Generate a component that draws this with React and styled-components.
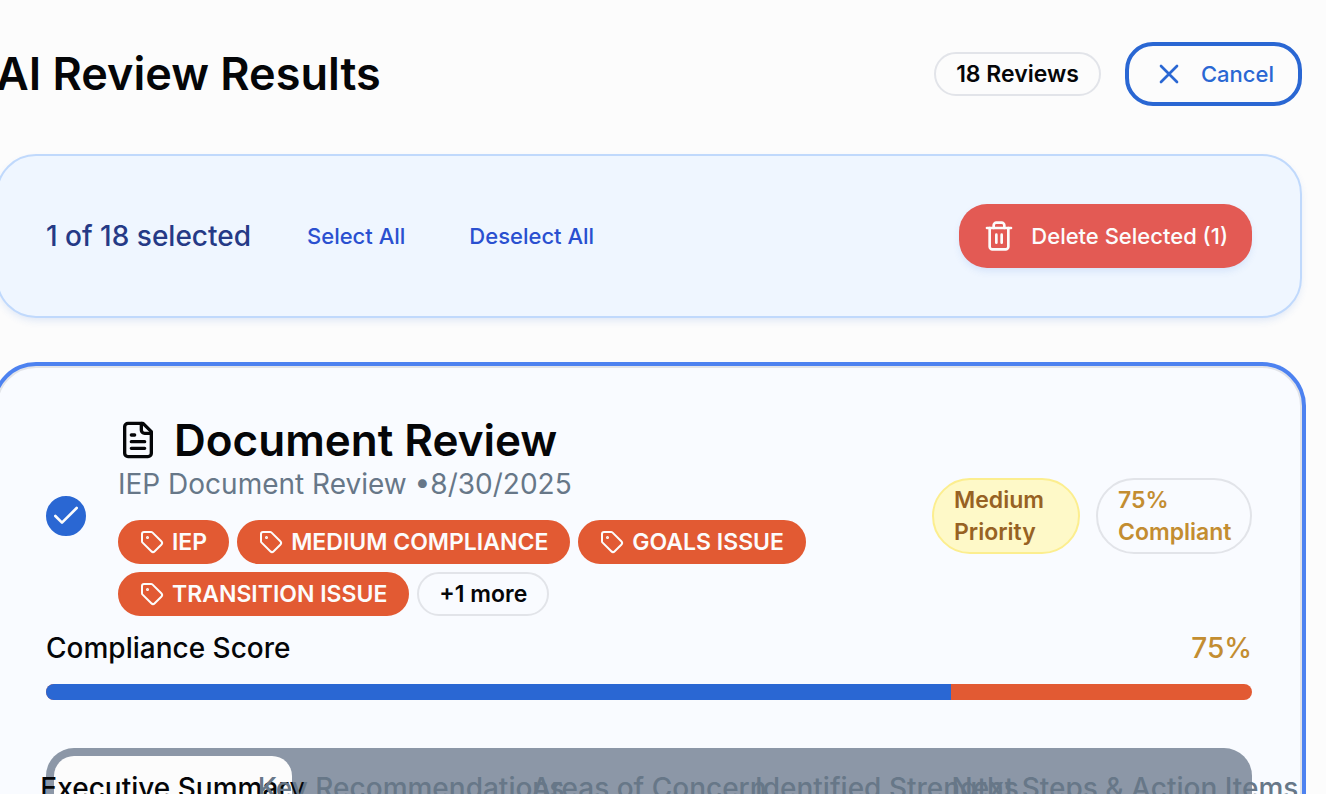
import React, { useState } from "react";
import styled, { createGlobalStyle, css } from "styled-components";

const GlobalStyle = createGlobalStyle`
  *, *::before, *::after { box-sizing: border-box; }
  html { scrollbar-width: none; }
  body {
    margin: 0;
    overflow-x: hidden;
    background: #fcfcfc;
    color: #050608;
    font-family: Inter, "Liberation Sans", sans-serif;
    font-size: 28px;
    line-height: 40px;
    -webkit-font-smoothing: antialiased;
  }
  h1, h2, p { margin: 0; }
  button { font: inherit; cursor: pointer; }
`;

const Page = styled.main`
  display: flex;
  flex-direction: column;
  gap: 48px;
  margin: 42px 24px 48px -4px;
`;

const Header = styled.header`
  display: flex;
  align-items: center;
  justify-content: space-between;
`;

const PageTitle = styled.h1`
  font-size: 45px;
  line-height: 64px;
  font-weight: 600;
`;

const Row = styled.div`
  display: flex;
  align-items: center;
  gap: ${(p) => p.$gap}px;
`;

const Icon = styled.svg`
  flex: none;
  width: ${(p) => p.$size}px;
  height: ${(p) => p.$size}px;
  fill: none;
  stroke: currentColor;
  stroke-width: 2;
  stroke-linecap: round;
  stroke-linejoin: round;
`;

const badgeTones = {
  outline: css`
    border-color: #e2e4e9;
  `,
  tag: css`
    background: #e25a33;
    border-color: #e25a33;
    color: #fcfcfc;
  `,
  medium: css`
    background: #fef9c8;
    border-color: #fcee8f;
    color: #976223;
  `,
  score: css`
    border-color: #e2e4e9;
    color: #c38d31;
  `,
};

const Badge = styled.span`
  display: inline-flex;
  align-items: center;
  gap: 8px;
  padding: 4px 20px;
  border: 2px solid;
  border-radius: 38px;
  font-size: 23px;
  line-height: 32px;
  font-weight: 600;
  ${(p) => p.$width && css`width: ${p.$width}px;`}
  ${(p) => badgeTones[p.$tone]}
`;

const buttonTones = {
  outline: css`
    border: 4px solid #2a67d3;
    background: transparent;
    color: #2a67d3;
  `,
  link: css`
    border: 0;
    background: transparent;
    color: #2a50d0;
  `,
  danger: css`
    border: 0;
    background: #e35a54;
    color: #fcfcfc;
    box-shadow: 0 4px 8px -2px rgba(42, 103, 211, 0.16);
  `,
};

const Button = styled.button`
  display: inline-flex;
  align-items: center;
  gap: 16px;
  height: 64px;
  padding: 0 24px;
  border-radius: 28px;
  font-size: 22px;
  line-height: 32px;
  font-weight: 500;
  white-space: nowrap;
  ${(p) => buttonTones[p.$tone]}
`;

const SelectionBar = styled.section`
  display: flex;
  align-items: center;
  justify-content: space-between;
  padding: 48px;
  border: 2px solid #c0d9fc;
  border-radius: 40px;
  background: #eff6ff;
  box-shadow: 0 4px 8px -2px rgba(42, 103, 211, 0.16);
`;

const SelectedCount = styled.p`
  font-weight: 500;
  color: #253a86;
`;

const Card = styled.article`
  padding: 48px;
  border: 2px solid #e2e4e9;
  border-radius: 40px;
  background: #f9fbff;
  box-shadow: 0 0 0 4px #4d82f0;
`;

const CardHeader = styled.div`
  display: flex;
  align-items: center;
  gap: 32px;
`;

const CheckWrap = styled.label`
  display: grid;
  flex: none;
  place-items: center;
  color: #fcfcfc;
  > * { grid-area: 1 / 1; }
  > svg { pointer-events: none; visibility: hidden; }
  > input:checked + svg { visibility: visible; }
`;

const CheckInput = styled.input`
  appearance: none;
  width: 40px;
  height: 40px;
  margin: 0;
  border: 2px solid #2a67d3;
  border-radius: 50%;
  &:checked { background: #2a67d3; }
`;

const CardMain = styled.div`
  flex: 1;
  min-width: 0;
`;

const CardTitle = styled.h2`
  font-size: 44px;
  line-height: 48px;
  font-weight: 600;
`;

const Meta = styled.p`
  color: #677788;
`;

const TagList = styled.div`
  display: flex;
  flex-wrap: wrap;
  gap: 8px;
  max-width: 768px;
  margin-top: 16px;
`;

const ScoreRow = styled.div`
  display: flex;
  justify-content: space-between;
  margin: 12px 0 16px;
  font-weight: 500;
`;

const ScoreValue = styled.span`
  color: #c38d31;
`;

const Track = styled.div`
  height: 16px;
  overflow: hidden;
  border-radius: 8px;
  background: #e25a33;
`;

const Fill = styled.div`
  height: 100%;
  background: #2a67d3;
`;

const TabList = styled.div`
  display: grid;
  grid-template-columns: repeat(5, minmax(0, 1fr));
  margin-top: 48px;
  padding: 8px;
  border-radius: 28px;
  background: #8c97a7;
`;

const Tab = styled.button`
  display: flex;
  justify-content: center;
  padding: 12px 24px;
  border: 0;
  border-radius: 20px;
  background: ${(p) => (p.$active ? "#fcfcfc" : "transparent")};
  color: ${(p) => (p.$active ? "#050608" : "#677788")};
  font-weight: 500;
  white-space: nowrap;
`;

const XIcon = () => (
  <Icon $size={32} viewBox="0 0 24 24" aria-hidden="true">
    <path d="M18 6 6 18M6 6l12 12" />
  </Icon>
);

const TrashIcon = () => (
  <Icon $size={32} viewBox="0 0 24 24" aria-hidden="true">
    <path d="M3 6h18" />
    <path d="M19 6v14c0 1-1 2-2 2H7c-1 0-2-1-2-2V6" />
    <path d="M8 6V4c0-1 1-2 2-2h4c1 0 2 1 2 2v2" />
    <path d="M10 11v6M14 11v6" />
  </Icon>
);

const FileIcon = () => (
  <Icon $size={40} viewBox="0 0 24 24" aria-hidden="true">
    <path d="M15 2H6a2 2 0 0 0-2 2v16a2 2 0 0 0 2 2h12a2 2 0 0 0 2-2V7Z" />
    <path d="M14 2v4a2 2 0 0 0 2 2h4" />
    <path d="M10 9H8M16 13H8M16 17H8" />
  </Icon>
);

const TagIcon = () => (
  <Icon $size={24} viewBox="0 0 24 24" aria-hidden="true">
    <path d="M12.586 2.586A2 2 0 0 0 11.172 2H4a2 2 0 0 0-2 2v7.172a2 2 0 0 0 .586 1.414l8.704 8.704a2.426 2.426 0 0 0 3.42 0l6.58-6.58a2.426 2.426 0 0 0 0-3.42z" />
    <circle cx="7.5" cy="7.5" r=".5" fill="currentColor" />
  </Icon>
);

const tags = ["IEP", "MEDIUM COMPLIANCE", "GOALS ISSUE", "TRANSITION ISSUE"];
const tabs = [
  "Executive Summary",
  "Key Recommendations",
  "Areas of Concern",
  "Identified Strengths",
  "Next Steps & Action Items",
];

export default function App() {
  const [selected, setSelected] = useState(1);
  const [tab, setTab] = useState(tabs[0]);
  const score = 75;

  return (
    <>
      <GlobalStyle />
      <Page>
        <Header>
          <PageTitle>AI Review Results</PageTitle>
          <Row $gap={24}>
            <Badge $tone="outline">18 Reviews</Badge>
            <Button type="button" $tone="outline">
              <XIcon />
              Cancel
            </Button>
          </Row>
        </Header>

        <SelectionBar>
          <Row $gap={32}>
            <SelectedCount>{selected} of 18 selected</SelectedCount>
            <Row $gap={16}>
              <Button type="button" $tone="link" onClick={() => setSelected(18)}>
                Select All
              </Button>
              <Button type="button" $tone="link" onClick={() => setSelected(0)}>
                Deselect All
              </Button>
            </Row>
          </Row>
          <Button type="button" $tone="danger">
            <TrashIcon />
            Delete Selected ({selected})
          </Button>
        </SelectionBar>

        <Card>
          <CardHeader>
            <CheckWrap>
              <CheckInput
                type="checkbox"
                aria-label="Select Document Review"
                checked={selected > 0}
                onChange={(e) => setSelected(e.target.checked ? 1 : 0)}
              />
              <Icon $size={32} viewBox="0 0 24 24" aria-hidden="true">
                <path d="M20 6 9 17l-5-5" />
              </Icon>
            </CheckWrap>
            <CardMain>
              <Row $gap={16}>
                <FileIcon />
                <CardTitle>Document Review</CardTitle>
              </Row>
              <Meta>IEP Document Review •8/30/2025</Meta>
              <TagList>
                {tags.map((t) => (
                  <Badge key={t} $tone="tag">
                    <TagIcon />
                    {t}
                  </Badge>
                ))}
                <Badge $tone="outline">+1 more</Badge>
              </TagList>
            </CardMain>
            <Row $gap={16}>
              <Badge $tone="medium" $width={148}>Medium Priority</Badge>
              <Badge $tone="score" $width={156}>75% Compliant</Badge>
            </Row>
          </CardHeader>

          <ScoreRow>
            <span>Compliance Score</span>
            <ScoreValue>{score}%</ScoreValue>
          </ScoreRow>
          <Track role="progressbar" aria-label="Compliance Score" aria-valuenow={score}>
            <Fill style={{ width: `${score}%` }} />
          </Track>

          <TabList role="tablist">
            {tabs.map((t) => (
              <Tab
                key={t}
                type="button"
                role="tab"
                aria-selected={t === tab}
                $active={t === tab}
                onClick={() => setTab(t)}
              >
                {t}
              </Tab>
            ))}
          </TabList>
        </Card>
      </Page>
    </>
  );
}
